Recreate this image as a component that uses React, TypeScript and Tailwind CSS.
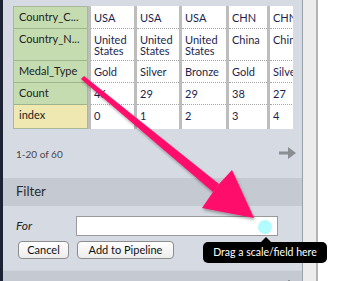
import * as React from "react";

const FONT = "font-['Lato','Noto_Sans',sans-serif]";

const headers = [
  { label: "Country_C...", h: "h-[22px]", tone: "green" },
  { label: "Country_N...", h: "h-[32px]", tone: "green" },
  { label: "Medal_Type", h: "h-[22px]", tone: "green" },
  { label: "Count", h: "h-[22px]", tone: "green" },
  { label: "index", h: "h-[23px]", tone: "yellow" },
];

const columns: Array<{ w: string; cells: string[][] }> = [
  { w: "w-[43px]", cells: [["USA"], ["United", "States"], ["Gold"], ["46"], ["0"]] },
  { w: "w-[42px]", cells: [["USA"], ["United", "States"], ["Silver"], ["29"], ["1"]] },
  { w: "w-[44px]", cells: [["USA"], ["United", "States"], ["Bronze"], ["29"], ["2"]] },
  { w: "w-[38px]", cells: [["CHN"], ["China"], ["Gold"], ["38"], ["3"]] },
  { w: "w-[40px]", cells: [["CHN"], ["China"], ["Silver"], ["27"], ["4"]] },
];

function DataTable() {
  return (
    <div className="flex w-[280px] gap-x-[3px] overflow-hidden bg-[#bdbdbd]">
      {/* header column */}
      <div className="flex w-[75px] shrink-0 flex-col border border-[#a9b89b]">
        {headers.map((h, i) => (
          <div
            key={h.label}
            className={`${h.h} shrink-0 px-[5px] pt-[4px] text-[11px] leading-[12px] text-[#222] ${
              h.tone === "yellow" ? "bg-[#efe9b1]" : "bg-[#c5dcb1]"
            } ${i < headers.length - 1 ? "border-b border-[#9fb38d]" : ""}`}
          >
            {h.label}
          </div>
        ))}
      </div>
      {columns.map((col, ci) => (
        <div key={ci} className={`flex ${col.w} shrink-0 flex-col bg-white`}>
          {col.cells.map((lines, ri) => (
            <div
              key={ri}
              className={`${headers[ri].h} shrink-0 whitespace-nowrap pl-[3px] pt-[5px] text-[11px] leading-[11px] text-[#1d1f4d] ${
                ri < col.cells.length - 1 ? "border-b border-dotted border-[#a8a8a8]" : ""
              } ${ri === 0 ? "mt-[1px]" : ""} ${ri === col.cells.length - 1 ? "mb-[1px]" : ""}`}
            >
              {lines.map((l) => (
                <div key={l}>{l}</div>
              ))}
            </div>
          ))}
        </div>
      ))}
    </div>
  );
}

function PinkArrow() {
  return (
    <svg
      className="pointer-events-none absolute left-0 top-0"
      width="353"
      height="281"
      viewBox="0 0 353 281"
    >
      <defs>
        <filter id="sh" x="-20%" y="-20%" width="140%" height="140%">
          <feDropShadow dx="1" dy="2" stdDeviation="1.5" floodColor="#000" floodOpacity="0.35" />
        </filter>
      </defs>
      <g filter="url(#sh)" fill="#ff0a6a">
        <polygon points="81,79 84,76 219,184 213,192" />
        <polygon points="254,218 232,170 219,184 213,192 202,208" />
      </g>
    </svg>
  );
}

export default function App() {
  return (
    <div className={`relative flex h-[281px] w-[353px] overflow-hidden bg-white ${FONT}`}>
      <div className="w-[3px] shrink-0 bg-[#1b2335]" />

      {/* main panel */}
      <div className="flex w-[300px] shrink-0 flex-col overflow-hidden border-r border-[#9aa2ae] bg-[#d6dbe3]">
        <div className="shrink-0 pl-[10px] pt-[6px]">
          <DataTable />
        </div>

        <div className="flex h-[49px] shrink-0 items-center justify-between pl-[13px] pr-[6px]">
          <span className="pt-[1px] text-[10px] text-[#4b4448]">1-20 of 60</span>
          <svg width="17" height="12" viewBox="0 0 17 12" className="-mt-[2px]">
            <path d="M0 4.5h9V0l8 6-8 6V7.5H0z" fill="#8a8d92" />
          </svg>
        </div>

        <div className="flex h-[28px] shrink-0 items-center bg-[#c4c9d2] pl-[13px] text-[13px] text-[#2b2b2b]">
          Filter
        </div>

        <div className="flex shrink-0 items-center pl-[13px] pt-[10px]">
          <span className="w-[60px] text-[12px] italic text-[#222]">For</span>
          <div className="h-[20px] w-[202px] border border-[#9a9a9a] bg-white" />
        </div>

        <div className="flex shrink-0 gap-[8px] pl-[15px] pt-[5px]">
          <button className="h-[18px] w-[51px] rounded-[4px] border border-[#8d8d8d] bg-gradient-to-b from-white to-[#ececec] text-[11px] leading-[16px] text-[#111]">
            Cancel
          </button>
          <button className="h-[18px] w-[97px] rounded-[4px] border border-[#8d8d8d] bg-gradient-to-b from-white to-[#ececec] text-[11px] leading-[16px] text-[#111]">
            Add to Pipeline
          </button>
        </div>

        <div className="mt-[11px] flex shrink-0 items-start justify-between border-t border-[#d0d4db] bg-[#c4c9d2] pl-[13px] pr-[12px] pt-[7px]">
          <span className="text-[13px] leading-[16px] text-[#2b2b2b]">Scales</span>
          <span className="mt-[2px] h-[6px] w-[2px] bg-[#8c9096]" />
        </div>
      </div>

      <div className="w-[15px] shrink-0 border-r-2 border-[#b4b4b4] bg-[#ececec]" />
      <div className="flex-1 bg-white" />

      <PinkArrow />

      {/* drop target marker */}
      <div className="absolute left-[258px] top-[220px] h-[14px] w-[14px] rounded-full bg-[#b2fbff]" />

      {/* tooltip */}
      <div className="absolute left-[203px] top-[242px] flex h-[21px] w-[124px] items-center justify-center rounded-[5px] bg-black text-[10.5px] text-white">
        Drag a scale/field here
      </div>
      <div className="absolute left-[261px] top-[237px] h-0 w-0 border-x-[5px] border-b-[5px] border-x-transparent border-b-black" />
    </div>
  );
}
